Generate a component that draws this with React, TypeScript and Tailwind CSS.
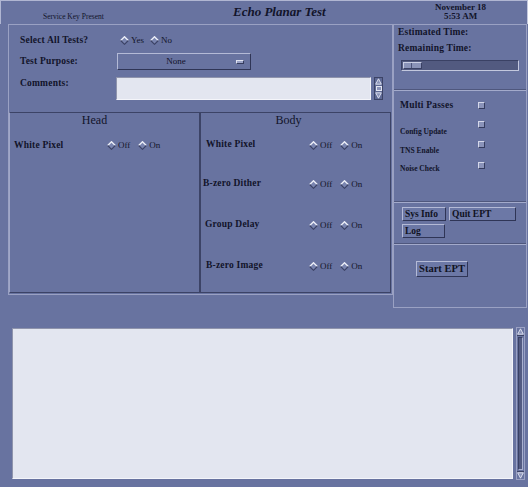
import React from "react"

const font = { fontFamily: '"Liberation Serif", "Times New Roman", serif' }

function Diamond() {
  return (
    <svg width="9" height="9" viewBox="0 0 9 9" className="shrink-0">
      <path d="M4.5 0.7 L8.3 4.5 L4.5 8.3 L0.7 4.5Z" fill="#7a85b0" />
      <path d="M0.7 4.5 L4.5 0.7 L8.3 4.5" stroke="#eef0f8" strokeWidth="1.3" fill="none" />
      <path d="M0.7 4.5 L4.5 8.3 L8.3 4.5" stroke="#3a4164" strokeWidth="1.1" fill="none" />
    </svg>
  )
}

function Radio({ label }: { label: string }) {
  return (
    <div className="flex items-center gap-[2px] text-[9px] leading-[12px] text-[#14162a]">
      <Diamond />
      <span>{label}</span>
    </div>
  )
}

function OffOn() {
  return (
    <div className="flex items-center gap-[8px]">
      <Radio label="Off" />
      <Radio label="On" />
    </div>
  )
}

function Check() {
  return (
    <div className="h-[7px] w-[7px] shrink-0 border border-t-[#d4d8ea] border-l-[#d4d8ea] border-b-[#353c5e] border-r-[#353c5e] bg-[#8a93b9]" />
  )
}

function Divider() {
  return (
    <div className="h-[2px] w-full shrink-0">
      <div className="h-px bg-[#4f577d]" />
      <div className="h-px bg-[#a3aacb]" />
    </div>
  )
}

function Button({ label, className }: { label: string; className: string }) {
  return (
    <div
      className={`flex items-center border border-t-[#b4bad6] border-l-[#b4bad6] border-b-[#2f3556] border-r-[#2f3556] bg-[#6c78a6] font-bold text-[#10121f] ${className}`}
    >
      {label}
    </div>
  )
}

function Arrow({ up }: { up: boolean }) {
  return (
    <svg width="7" height="7" viewBox="0 0 7 7">
      {up ? (
        <path d="M3.5 0.8 L6.3 6.2 L0.7 6.2Z" fill="#8a93b9" stroke="#e4e7f3" strokeWidth="0.9" />
      ) : (
        <path d="M3.5 6.2 L6.3 0.8 L0.7 0.8Z" fill="#8a93b9" stroke="#e4e7f3" strokeWidth="0.9" />
      )}
    </svg>
  )
}

const label = "text-[9.5px] font-bold tracking-[0.2px]"

const bodyRows = [
  { label: "White Pixel", pl: "pl-[5px]", mt: "mt-[12px]" },
  { label: "B-zero Dither", pl: "pl-[2px]", mt: "mt-[27px]" },
  { label: "Group Delay", pl: "pl-[4px]", mt: "mt-[29px]" },
  { label: "B-zero Image", pl: "pl-[5px]", mt: "mt-[29px]" },
]

export default function App() {
  return (
    <div style={font} className="h-[487px] w-[528px] overflow-hidden bg-[#6873a0] text-[#12142a]">
      {/* header */}
      <div className="flex h-[24px] border-l border-r border-t border-l-[#b0b6d2] border-r-[#c4c9df] border-t-[#b0b6d2]">
        <div className="w-[232px] pl-[42px] pt-[11px] text-[7.5px] leading-[9px]">Service Key Present</div>
        <div className="w-[161px] pt-[3px] text-[13px] font-bold italic leading-[15px]">Echo Planar Test</div>
        <div className="flex-1 pt-[2px] text-center text-[9px] font-bold leading-[9px]">
          <div>November 18</div>
          <div>5:53 AM</div>
        </div>
      </div>

      <div className="flex items-start">
        {/* left main panel */}
        <div className="ml-[8px] h-[271px] w-[385px] border border-[#9aa1c3]">
          <div className="ml-[11px] mt-[7px] flex h-[16px] items-center">
            <div className={`w-[97px] ${label}`}>Select All Tests?</div>
            <div className="ml-[3px] flex items-center gap-[6px]">
              <Radio label="Yes" />
              <Radio label="No" />
            </div>
          </div>
          <div className="ml-[11px] mt-[5px] flex h-[17px] items-center">
            <div className={`w-[97px] ${label}`}>Test Purpose:</div>
            <div className="relative flex h-[17px] w-[134px] items-center justify-center border border-t-[#b4bad6] border-l-[#b4bad6] border-b-[#2f3556] border-r-[#2f3556] text-[9px]">
              <span className="-ml-[16px]">None</span>
              <div className="absolute right-[6px] top-[6px] h-[4px] w-[8px] border border-t-[#e2e5f2] border-l-[#e2e5f2] border-b-[#353c5e] border-r-[#353c5e] bg-[#9aa2c6]" />
            </div>
          </div>
          <div className="ml-[11px] mt-[7px] flex items-start">
            <div className={`w-[96px] leading-[12px] ${label}`}>Comments:</div>
            <div className="h-[23px] w-[255px] border border-t-[#8f94ac] border-l-[#8f94ac] border-b-[#f4f5fa] border-r-[#f4f5fa] bg-[#e3e6f0]" />
            <div className="ml-[3px] flex h-[23px] w-[9px] flex-col items-center border border-[#3c4366] bg-[#5d6894]">
              <Arrow up />
              <div className="my-[1px] h-[5px] w-[6px] border border-[#e4e7f3] bg-[#8a93b9]" />
              <Arrow up={false} />
            </div>
          </div>

          <div className="mt-[12px] flex">
            {/* head */}
            <div className="h-[181px] w-[191px] border border-t-[#3c4366] border-l-[#a0a7c8] border-b-[#3c4366] border-r-[#3c4366]">
              <div className="pr-[20px] text-center text-[12px] font-medium leading-[14px]">Head</div>
              <div className="mt-[12px] flex h-[12px] items-center pl-[4px]">
                <div className={`w-[93px] ${label}`}>White Pixel</div>
                <OffOn />
              </div>
            </div>
            {/* body */}
            <div className="h-[181px] w-[191px] border border-[#3c4366]">
              <div className="pr-[14px] text-center text-[12px] font-medium leading-[14px]">Body</div>
              {bodyRows.map((r) => (
                <div key={r.label} className={`flex h-[12px] items-center ${r.mt}`}>
                  <div className={`w-[108px] ${label} ${r.pl}`}>
                    <span className="relative -top-[1px]">{r.label}</span>
                  </div>
                  <OffOn />
                </div>
              ))}
            </div>
          </div>
        </div>

        {/* right panel */}
        <div className="flex h-[284px] w-[134px] flex-col border border-[#9aa1c3]">
          <div className="flex h-[64px] flex-col pl-[4px]">
            <div className={`pt-[1px] leading-[12px] ${label}`}>Estimated Time:</div>
            <div className={`mt-[4px] leading-[12px] ${label}`}>Remaining Time:</div>
            <div className="ml-[3px] mt-[6px] flex h-[11px] w-[118px] items-stretch border border-t-[#3a4164] border-l-[#3a4164] border-b-[#c3c8de] border-r-[#c3c8de] bg-[#525a80] p-[1px]">
              <div className="flex w-[19px] border border-t-[#c9cee3] border-l-[#c9cee3] border-b-[#3a4164] border-r-[#3a4164] bg-[#8a93b8]">
                <div className="w-[8px] border-r border-r-[#4c547a]" />
              </div>
            </div>
          </div>
          <Divider />
          <div className="flex h-[110px] flex-col pl-[6px] pt-[8px]">
            <div className="flex h-[12px] items-start">
              <div className={`w-[78px] leading-[12px] ${label}`}>Multi Passes</div>
              <div className="mt-[3px]">
                <Check />
              </div>
            </div>
            <div className="mt-[8px] flex h-[18px] items-start">
              <div className="mt-[8px] w-[78px] text-[7.5px] font-bold leading-[10px]">Config Update</div>
              <div className="mt-[2px]">
                <Check />
              </div>
            </div>
            <div className="mt-[2px] flex h-[17px] items-start">
              <div className="mt-[7px] w-[78px] text-[7.5px] font-bold leading-[10px]">TNS Enable</div>
              <div className="mt-[2px]">
                <Check />
              </div>
            </div>
            <div className="mt-[4px] flex h-[14px] items-start">
              <div className="mt-[4px] w-[78px] text-[7.5px] font-bold leading-[10px]">Noise Check</div>
              <div className="mt-[2px]">
                <Check />
              </div>
            </div>
          </div>
          <Divider />
          <div className="flex h-[40px] flex-col pl-[8px] pt-[4px]">
            <div className="flex">
              <Button label="Sys Info" className="h-[14px] w-[44px] pl-[2px] text-[9.5px]" />
              <Button label="Quit EPT" className="ml-[3px] h-[14px] w-[67px] pl-[2px] text-[9.5px]" />
            </div>
            <Button label="Log" className="mt-[3px] h-[14px] w-[43px] pl-[2px] text-[9.5px]" />
          </div>
          <Divider />
          <div className="flex flex-col pl-[22px] pt-[16px]">
            <Button label="Start EPT" className="h-[16px] w-[52px] justify-center text-[10.5px]" />
          </div>
        </div>
      </div>

      {/* bottom log area */}
      <div className="mt-[20px] flex items-start">
        <div className="ml-[12px] h-[151px] w-[501px] border border-t-[#8f94ac] border-l-[#8f94ac] border-b-[#f4f5fa] border-r-[#f4f5fa] bg-[#e3e6f0]" />
        <div className="-mt-[1px] ml-[3px] flex h-[153px] w-[9px] flex-col border border-[#9aa1c3] bg-[#6873a0]">
          <div className="flex h-[8px] items-center justify-center border-b border-[#3c4366]">
            <Arrow up />
          </div>
          <div className="mx-auto my-[1px] w-[5px] flex-1 border border-t-[#3a4164] border-l-[#3a4164] border-b-[#a9b0cf] border-r-[#a9b0cf] bg-[#535b82]" />
          <div className="flex h-[8px] items-center justify-center border-t border-[#3c4366]">
            <Arrow up={false} />
          </div>
        </div>
      </div>
    </div>
  )
}
